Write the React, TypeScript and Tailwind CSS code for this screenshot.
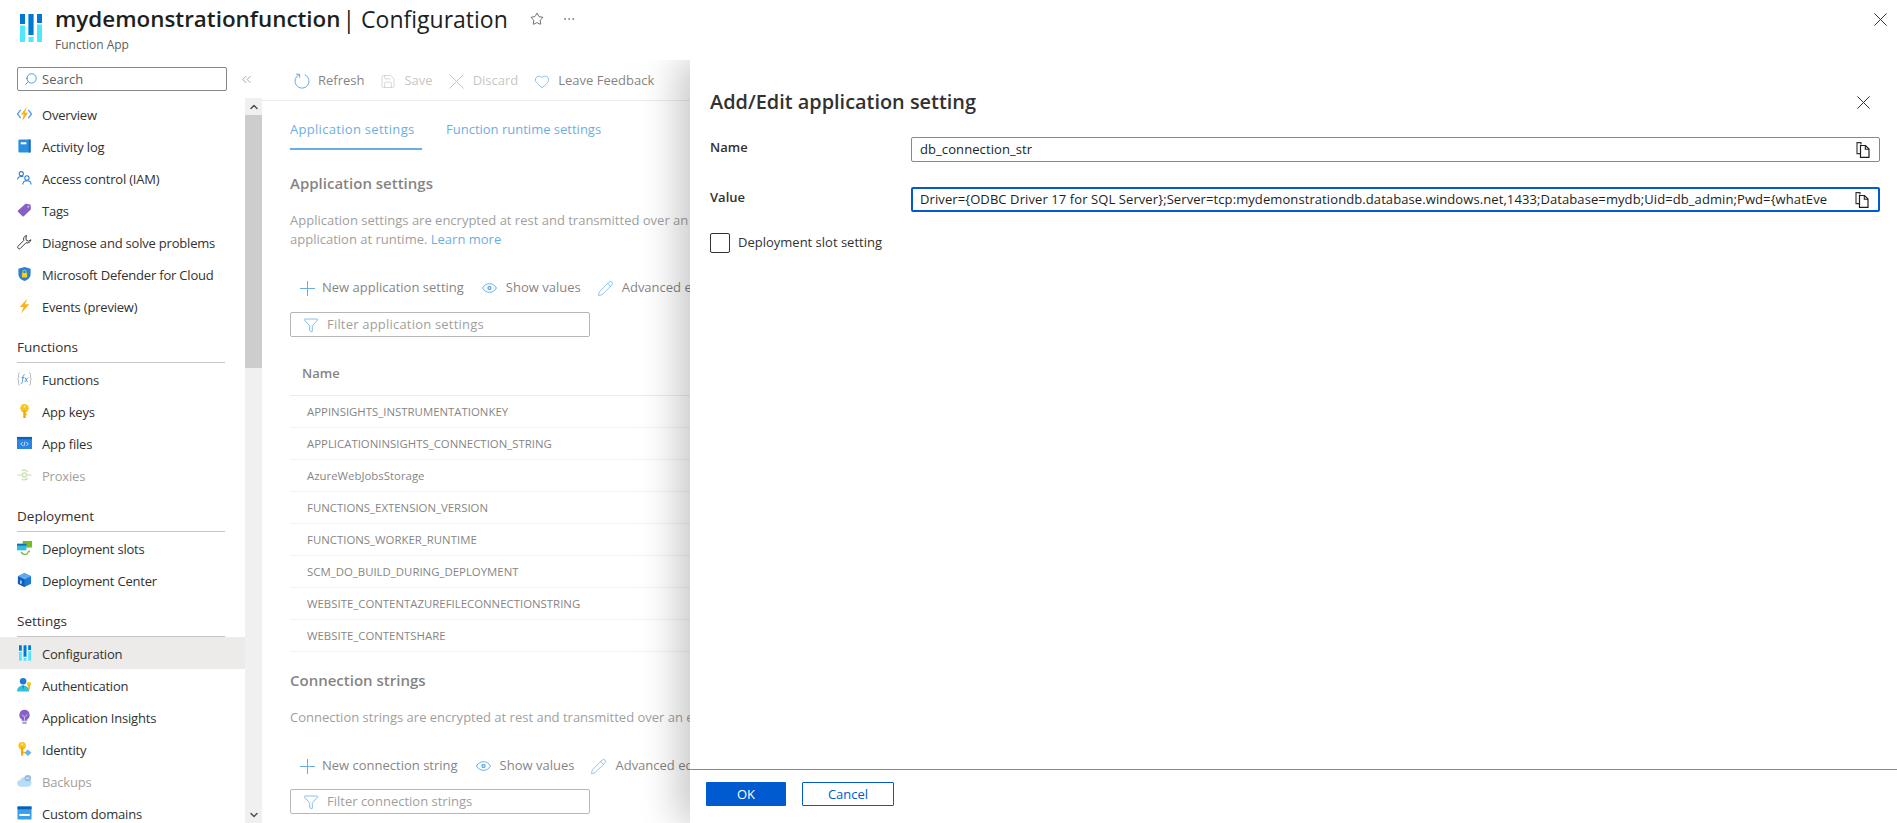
import React from "react";
import {
  ChevronDown,
  ChevronUp,
  ChevronsLeft,
  Ellipsis,
  Funnel,
  Heart,
  Pencil,
  Save,
  Search,
  Star,
} from "lucide-react";

function ConfigIcon({ width = 22, height = 28 }: { width?: number; height?: number }) {
  return (
    <svg width={width} height={height} viewBox="0 0 22 28">
      <rect x="0" y="0" width="5" height="28" rx="0.6" fill="#50e6ff" />
      <rect x="8.500" y="0" width="5" height="28" rx="0.6" fill="#50e6ff" />
      <rect x="17" y="0" width="5" height="28" rx="0.6" fill="#50e6ff" />
      <rect x="0" y="0" width="5" height="10" fill="#0078d4" />
      <rect x="8.500" y="0" width="5" height="21" fill="#0078d4" />
      <rect x="17" y="0" width="5" height="9" fill="#0078d4" />
      <rect x="0" y="10" width="5" height="1.500" fill="#fff" />
      <rect x="8.500" y="21" width="5" height="2" fill="#fff" />
      <rect x="17" y="9" width="5" height="1.500" fill="#fff" />
    </svg>
  );
}

function CrossIcon({ size, className }: { size: number; className?: string }) {
  return (
    <svg width={size} height={size} viewBox="0 0 16 16" className={className}>
      <path d="M.5.5l15 15M15.500.5l-15 15" fill="none" stroke="currentColor" strokeWidth={(16 / size) * 1} />
    </svg>
  );
}

function PlusIcon() {
  return (
    <svg width="15" height="15" viewBox="0 0 15 15" className="text-[#0078d4] mr-[7px]">
      <path d="M7.500 0v15M0 7.500h15" stroke="currentColor" strokeWidth="1" />
    </svg>
  );
}

function EyeIcon({ className }: { className?: string }) {
  return (
    <svg width="15" height="10" viewBox="0 0 15 10" className={className}>
      <path d="M.5 5C2.300 2 4.700.7 7.500.7S12.700 2 14.500 5c-1.800 3-4.200 4.300-7 4.300S2.300 8 .5 5z" fill="none" stroke="#0078d4" strokeWidth="1" />
      <circle cx="7.500" cy="5" r="2.200" fill="#0078d4" />
      <circle cx="7.500" cy="5" r=".8" fill="#fff" />
    </svg>
  );
}

function RefreshIcon() {
  return (
    <svg width="16" height="16" viewBox="0 0 16 16" fill="none" stroke="#0078d4" strokeWidth="1">
      <path d="M5.300 1.700a7 7 0 1 0 5.400 0" />
      <path d="M2 1.200h3.600v3.600" />
    </svg>
  );
}

function CopyIcon() {
  return (
    <svg width="14" height="16" viewBox="0 0 14 16" fill="none" className="ml-[28px] shrink-0">
      <path d="M5 2.500V.6H1v11h3" stroke="#323130" strokeWidth="1.100" />
      <path d="M4.500 3.500h5l3.500 3.500v8.400H4.500z" fill="#fff" stroke="#201f1e" strokeWidth="1.200" />
      <path d="M9.300 3.500V7.200H13" stroke="#201f1e" strokeWidth="1.100" />
    </svg>
  );
}

const icons: Record<string, React.ReactNode> = {
  overview: (
    <svg width="16" height="16" viewBox="0 0 16 16">
      <path d="M4 3.500 0.500 8 4 12.500" fill="none" stroke="#50a0e6" strokeWidth="1.400" />
      <path d="M12 3.500 15.500 8 12 12.500" fill="none" stroke="#50a0e6" strokeWidth="1.400" />
      <path d="M10.500 0.500 4 8.500h3.200L5.500 15.500l6.500-8.800H8.500z" fill="#fcb01e" />
    </svg>
  ),
  log: (
    <svg width="16" height="16" viewBox="0 0 16 16">
      <rect x="1.500" y="1" width="13" height="14" rx="1.200" fill="#2b8fe0" />
      <rect x="12.500" y="1" width="2" height="14" fill="#1b6bb4" />
      <rect x="4" y="4" width="6" height="2.200" fill="#fff" />
    </svg>
  ),
  iam: (
    <svg width="16" height="16" viewBox="0 0 16 16" fill="none" stroke="#2a7cd3" strokeWidth="1.100">
      <circle cx="4.600" cy="3.400" r="2.200" />
      <path d="M0.700 9.500c0-2 1.600-3.200 3.900-3.200 0.800 0 1.500 0.100 2.100 0.400" />
      <circle cx="10.600" cy="8" r="2.300" />
      <path d="M6.200 15c0-2.600 1.800-4 4.400-4s4.400 1.400 4.400 4" />
    </svg>
  ),
  tag: (
    <svg width="16" height="16" viewBox="0 0 16 16">
      <path d="M1 8.500 8.500 1.800c.4-.4 1-.5 1.500-.4l3.600 .6c.7.1 1 .5 1 1.200l.2 3.400c0 .5-.2 1-.6 1.300L7.200 14.600c-.4.4-1 .4-1.400 0L1 9.900c-.4-.4-.4-1 0-1.400z" fill="#8661c5" />
      <circle cx="12" cy="4.400" r="1" fill="#d8c8f0" />
    </svg>
  ),
  wrench: (
    <svg width="16" height="16" viewBox="0 0 16 16" fill="none" stroke="#323130" strokeWidth="1">
      <path d="M10.200 1.100a4 4 0 0 0-3 5.300L1.100 12.500a1.500 1.500 0 0 0 0 2.100l.3.300a1.500 1.500 0 0 0 2.100 0l6.100-6.100a4 4 0 0 0 5.300-3.200l-2.500 1.500-2.500-.9-.4-2.500z" />
    </svg>
  ),
  defender: (
    <svg width="16" height="16" viewBox="0 0 16 16">
      <path d="M8 0.500 14.500 2.500V8c0 3.800-3 6.200-6.500 7.500C4.500 14.200 1.500 11.800 1.500 8V2.500z" fill="#2b7fd4" />
      <rect x="5.200" y="7" width="5.600" height="4.600" rx="0.500" fill="#fcd116" />
      <path d="M6.300 7V5.500a1.700 1.700 0 0 1 3.400 0V7" fill="none" stroke="#fcd116" strokeWidth="1" />
    </svg>
  ),
  events: (
    <svg width="16" height="16" viewBox="0 0 16 16">
      <path d="M11 0 3 9h4l-2.500 7 8.500-10H8.500z" fill="#fcb01e" />
    </svg>
  ),
  fx: (
    <svg width="16" height="16" viewBox="0 0 16 16" fill="none">
      <path d="M3 1.500c-1.200 0-1.300.6-1.300 1.500v3c0 1-.4 1.600-1.200 2 .8.400 1.200 1 1.200 2v3c0 .9.100 1.500 1.300 1.500" stroke="#a0a0a0" strokeWidth=".8" />
      <path d="M13 1.500c1.200 0 1.300.6 1.300 1.500v3c0 1 .4 1.600 1.200 2-.8.400-1.200 1-1.200 2v3c0 .9-.1 1.500-1.300 1.500" stroke="#a0a0a0" strokeWidth=".8" />
      <path d="M8.300 3.500C7 3.200 6.700 4 6.500 5.500L5.700 11c-.2 1.300-.6 2-1.700 1.700M4.800 6.500h3M8.500 6.500l2.800 4.800M11.600 6.500 8.200 11.300" stroke="#3c8ce0" strokeWidth=".9" />
    </svg>
  ),
  key: (
    <svg width="16" height="16" viewBox="0 0 16 16">
      <circle cx="8" cy="5" r="4.500" fill="#fcc419" />
      <rect x="6.700" y="7" width="2.600" height="8.500" fill="#f2a900" />
      <rect x="9" y="11" width="1.500" height="1.300" fill="#f2a900" />
      <circle cx="8" cy="3.300" r="1" fill="#fff3c4" />
    </svg>
  ),
  files: (
    <svg width="16" height="16" viewBox="0 0 16 16">
      <rect x="0" y="1.500" width="16" height="13" rx="0.500" fill="#2a85e0" />
      <rect x="0" y="1.500" width="16" height="2.500" fill="#0f5fb8" />
      <path d="M6 7 4 9l2 2M10 7l2 2-2 2M8.700 6.500 7.300 11.500" fill="none" stroke="#fff" strokeWidth=".8" />
    </svg>
  ),
  proxies: (
    <svg width="16" height="16" viewBox="0 0 16 16" fill="none" stroke="#b5d89a" strokeWidth="1.300">
      <circle cx="8" cy="8" r="2.200" />
      <path d="M0.500 8H5.500M10.500 8h5M5 3.500a6 6 0 0 1 6.500 1M5 12.500a6 6 0 0 0 6.500-1" />
    </svg>
  ),
  slots: (
    <svg width="16" height="16" viewBox="0 0 16 16">
      <rect x="6" y="0.500" width="10" height="7" fill="#76bc2d" />
      <rect x="0" y="3.500" width="10" height="7" fill="#32bedd" />
      <rect x="0" y="3.500" width="10" height="2" fill="#1b6bb4" />
      <path d="M4.500 12a4 4 0 0 0 7.500 0.500" fill="none" stroke="#76bc2d" strokeWidth="1.300" />
      <path d="M10.300 12.500h3.400V10z" fill="#76bc2d" />
    </svg>
  ),
  center: (
    <svg width="16" height="16" viewBox="0 0 16 16">
      <path d="M8 0.500 15 4v8l-7 3.500L1 12V4z" fill="#1f78d1" />
      <path d="M8 0.500 15 4 8 7.500 1 4z" fill="#5ea9ef" />
      <path d="M8 7.500V15.500L1 12V4z" fill="#0f5fb8" />
      <rect x="3.500" y="8.500" width="1.300" height="3.500" fill="#fff" />
    </svg>
  ),
  config: <ConfigIcon width={12} height={16} />,
  auth: (
    <svg width="16" height="16" viewBox="0 0 16 16">
      <circle cx="6.500" cy="4" r="3.500" fill="#1f78d1" />
      <path d="M0 15c0-4 2.500-6.500 6.500-6.500S13 11 13 15z" fill="#32bedd" />
      <path d="M5.500 8.500h2L6.500 13z" fill="#1f78d1" />
      <circle cx="12.800" cy="7" r="2.300" fill="#fcc419" />
      <rect x="12" y="8" width="1.600" height="5" fill="#f2a900" />
    </svg>
  ),
  insights: (
    <svg width="16" height="16" viewBox="0 0 16 16">
      <path d="M8 0.300a5.500 5.500 0 0 0-3 10.100V12h6v-1.600A5.500 5.500 0 0 0 8 0.300z" fill="#8661c5" />
      <path d="M5 5.500 8 8l3-2.500M8 8v4" fill="none" stroke="#e3d6f5" strokeWidth=".8" />
      <rect x="5.500" y="12.800" width="5" height="2.700" rx="1" fill="#b0a8c0" />
    </svg>
  ),
  identity: (
    <svg width="16" height="16" viewBox="0 0 16 16">
      <circle cx="5.500" cy="4.500" r="4" fill="#fcc419" />
      <rect x="4.300" y="6" width="2.400" height="9" fill="#f2a900" />
      <rect x="6.500" y="11" width="2" height="1.300" fill="#f2a900" />
      <circle cx="5.500" cy="3" r="1" fill="#fff3c4" />
      <path d="M11.500 8.500 15.500 12l-4 3.500-3.500-3.500z" fill="#6bb3e8" />
    </svg>
  ),
  backups: (
    <svg width="16" height="16" viewBox="0 0 16 16">
      <path d="M4 14a3.500 3.500 0 0 1-.6-7A5 5 0 0 1 12.500 6.500 3.800 3.800 0 0 1 12 14z" fill="#a5d8f3" />
      <circle cx="11.500" cy="5" r="3.500" fill="#7aa9e6" />
      <path d="M9.500 5h3.500" stroke="#fff" strokeWidth="1" />
    </svg>
  ),
  domains: (
    <svg width="16" height="16" viewBox="0 0 16 16">
      <rect x="0.500" y="1" width="15" height="14" rx="0.500" fill="#3aa0e8" />
      <rect x="0.500" y="1" width="15" height="3" fill="#0f5fb8" />
      <rect x="2.500" y="9" width="11" height="2.200" fill="#fff" />
    </svg>
  ),
};

type NavItem = { label: string; icon: string; muted?: boolean; active?: boolean };
type NavGroup = { title?: string; items: NavItem[] };

const navGroups: NavGroup[] = [
  {
    items: [
      { label: "Overview", icon: "overview" },
      { label: "Activity log", icon: "log" },
      { label: "Access control (IAM)", icon: "iam" },
      { label: "Tags", icon: "tag" },
      { label: "Diagnose and solve problems", icon: "wrench" },
      { label: "Microsoft Defender for Cloud", icon: "defender" },
      { label: "Events (preview)", icon: "events" },
    ],
  },
  {
    title: "Functions",
    items: [
      { label: "Functions", icon: "fx" },
      { label: "App keys", icon: "key" },
      { label: "App files", icon: "files" },
      { label: "Proxies", icon: "proxies", muted: true },
    ],
  },
  {
    title: "Deployment",
    items: [
      { label: "Deployment slots", icon: "slots" },
      { label: "Deployment Center", icon: "center" },
    ],
  },
  {
    title: "Settings",
    items: [
      { label: "Configuration", icon: "config", active: true },
      { label: "Authentication", icon: "auth" },
      { label: "Application Insights", icon: "insights" },
      { label: "Identity", icon: "identity" },
      { label: "Backups", icon: "backups", muted: true },
      { label: "Custom domains", icon: "domains" },
    ],
  },
];

const appSettings = [
  "APPINSIGHTS_INSTRUMENTATIONKEY",
  "APPLICATIONINSIGHTS_CONNECTION_STRING",
  "AzureWebJobsStorage",
  "FUNCTIONS_EXTENSION_VERSION",
  "FUNCTIONS_WORKER_RUNTIME",
  "SCM_DO_BUILD_DURING_DEPLOYMENT",
  "WEBSITE_CONTENTAZUREFILECONNECTIONSTRING",
  "WEBSITE_CONTENTSHARE",
];

const connectionValue =
  "Driver={ODBC Driver 17 for SQL Server};Server=tcp:mydemonstrationdb.database.windows.net,1433;Database=mydb;Uid=db_admin;Pwd={whatEve";

function Sidebar() {
  return (
    <aside className="w-[262px] shrink-0 flex flex-col h-full">
      <div className="h-[38px] shrink-0 flex items-start pt-[7px] pl-[17px]">
        <div className="w-[210px] h-[24px] border border-[#8a8886] rounded-[2px] flex items-center pl-[6px] gap-[4px]">
          <Search size={14} strokeWidth={1.2} className="text-[#0078d4] -scale-x-100" />
          <span className="text-[#605e5c] pt-[2px]">Search</span>
        </div>
        <ChevronsLeft size={15} strokeWidth={1.2} className="ml-[12px] mt-[5px] text-[#8a8886]" />
      </div>
      <div className="flex flex-1 min-h-0">
        <nav className="w-[245px] shrink-0 overflow-hidden">
          {navGroups.map((group, i) => (
            <div key={i}>
              {group.title && (
                <div className="h-[41px] ml-[17px] mr-[20px] border-b border-[#c8c6c4] flex items-end pb-[5px] text-[13.5px] font-medium text-[#323130]">
                  {group.title}
                </div>
              )}
              {group.items.map((item) => (
                <div
                  key={item.label}
                  className={`h-[32px] pl-[17px] flex items-center gap-[10px] tracking-[-0.2px] ${item.active ? "bg-[#edebe9]" : ""} ${item.muted ? "text-[#a19f9d]" : "text-[#323130]"}`}
                >
                  <span className={`w-[15px] flex justify-center ${item.muted ? "opacity-80" : ""}`}>{icons[item.icon]}</span>
                  <span className="pt-[3px]">{item.label}</span>
                </div>
              ))}
            </div>
          ))}
        </nav>
        <div className="w-[17px] shrink-0 bg-[#f0f0f0] flex flex-col justify-between relative">
          <div className="h-[17px] flex items-center justify-center bg-[#f0f0f0]">
            <ChevronUp size={12} strokeWidth={3} className="text-[#505050]" />
          </div>
          <div className="absolute top-[17px] left-0 w-full h-[253px] bg-[#cdcdcd]" />
          <div className="h-[17px] flex items-center justify-center">
            <ChevronDown size={12} strokeWidth={3} className="text-[#505050]" />
          </div>
        </div>
      </div>
    </aside>
  );
}

function ToolbarButton({ icon, label, muted, className }: { icon: React.ReactNode; label: string; muted?: boolean; className?: string }) {
  return (
    <div className={`flex items-center gap-[8px] ${muted ? "text-[#a19f9d]" : "text-[#323130]"} ${className ?? ""}`}>
      <span className="w-[16px] flex justify-center">{icon}</span>
      <span>{label}</span>
    </div>
  );
}

function SettingsCommands({ newLabel }: { newLabel: string }) {
  return (
    <div className="flex items-center h-[24px] pl-[10px] text-[#323130] whitespace-nowrap">
      <PlusIcon />
      <span>{newLabel}</span>
      <EyeIcon className="ml-[18px] mr-[9px]" />
      <span>Show values</span>
      <Pencil size={17} strokeWidth={1} className="text-[#0078d4] ml-[16px] mr-[8px]" />
      <span>Advanced edit</span>
    </div>
  );
}

function FilterBox({ placeholder, className }: { placeholder: string; className?: string }) {
  return (
    <div className={`w-[300px] h-[25px] border border-[#8a8886] rounded-[2px] flex items-center pl-[12px] gap-[8px] text-[#605e5c] ${className ?? ""}`}>
      <Funnel size={16} strokeWidth={1.2} className="text-[#0078d4]" />
      <span>{placeholder}</span>
    </div>
  );
}

function MainContent() {
  return (
    <main className="flex-1 min-w-0 h-full overflow-hidden relative">
      <div className="h-[41px] border-b border-[#e1dfdd] flex items-center pl-[32px] pt-[2px] whitespace-nowrap">
        <ToolbarButton icon={<RefreshIcon />} label="Refresh" />
        <ToolbarButton className="ml-[16px]" muted icon={<Save size={17} strokeWidth={1} />} label="Save" />
        <ToolbarButton className="ml-[16px]" muted icon={<CrossIcon size={15} />} label="Discard" />
        <ToolbarButton className="ml-[16px]" icon={<Heart size={17} strokeWidth={1.1} className="text-[#0078d4]" />} label="Leave Feedback" />
      </div>

      <div className="pl-[28px] whitespace-nowrap">
        <div className="h-[49px] flex items-start">
          <div className="w-[132px] h-full border-b-2 border-[#0078d4] text-[#0078d4] pt-[19px] font-medium tracking-[0.3px]">Application settings</div>
          <div className="ml-[24px] text-[#0078d4] pt-[19px]">Function runtime settings</div>
        </div>

        <h2 className="mt-[23px] text-[15px] font-semibold text-[#323130] leading-[20px]">Application settings</h2>
        <p className="mt-[18px] leading-[19px] text-[#605e5c]">
          Application settings are encrypted at rest and transmitted over an encrypted channel.
          <br />
          application at runtime. <span className="text-[#0078d4]">Learn more</span>
        </p>
        <div className="mt-[27px]">
          <SettingsCommands newLabel="New application setting" />
        </div>
        <FilterBox placeholder="Filter application settings" className="mt-[12px] tracking-[0.2px]" />

        <div className="mt-[27px]">
          <div className="h-[32px] border-b border-[#e1dfdd] pl-[12px] font-semibold text-[#323130]">Name</div>
          {appSettings.map((name) => (
            <div key={name} className="h-[32px] border-b border-[#edebe9] pl-[17px] flex items-center text-[11.4px] text-[#323130]">
              {name}
            </div>
          ))}
        </div>

        <h2 className="mt-[18px] text-[15px] font-semibold text-[#323130] leading-[20px]">Connection strings</h2>
        <p className="mt-[18px] leading-[19px] text-[#605e5c]">Connection strings are encrypted at rest and transmitted over an encrypted channel.</p>
        <div className="mt-[27px]">
          <SettingsCommands newLabel="New connection string" />
        </div>
        <FilterBox placeholder="Filter connection strings" className="mt-[11px]" />
      </div>

      {/* scrim from the open blade */}
      <div className="absolute inset-0 bg-white/40" />
    </main>
  );
}

function CopyField({ value, focused }: { value: string; focused?: boolean }) {
  return (
    <div
      className={`flex-1 min-w-0 h-[25px] rounded-[2px] flex items-center pr-[9px] ${focused ? "border-2 border-[#005bd1] pl-[7px]" : "border border-[#8a8886] pl-[8px]"}`}
    >
      <span className="flex-1 min-w-0 overflow-hidden whitespace-nowrap text-[#201f1e] tracking-[0.09px]">{value}</span>
      <CopyIcon />
    </div>
  );
}

function EditPanel() {
  return (
    <section className="absolute top-0 bottom-0 left-[690px] right-0 bg-white flex flex-col shadow-[-12px_0_36px_rgba(0,0,0,0.22)] [clip-path:inset(0_0_0_-100px)]">
      <div className="flex-1 pl-[20px] pr-[17px]">
        <div className="h-[82px] flex items-center justify-between pt-[2px]">
          <h1 className="text-[19.900px] font-semibold text-[#323130]">Add/Edit application setting</h1>
          <CrossIcon size={13} className="text-[#323130] mr-[10px]" />
        </div>
        <div className="flex items-start mt-[-5px]">
          <label className="w-[201px] shrink-0 font-semibold text-[#323130] mt-[1px]">Name</label>
          <CopyField value="db_connection_str" />
        </div>
        <div className="flex items-start mt-[25px]">
          <label className="w-[201px] shrink-0 font-semibold text-[#323130] mt-[1px]">Value</label>
          <CopyField value={connectionValue} focused />
        </div>
        <div className="flex items-center mt-[21px] gap-[8px]">
          <span className="w-[20px] h-[20px] border border-[#323130] rounded-[2px]" />
          <span className="text-[#323130]">Deployment slot setting</span>
        </div>
      </div>
      <div className="h-[54px] border-t border-[#8a8886] flex items-start pt-[12px] pl-[16px] gap-[16px] shrink-0">
        <button className="w-[80px] h-[24px] bg-[#005bd1] text-white rounded-[1px] pt-[1px]">OK</button>
        <button className="w-[92px] h-[24px] border border-[#005bd1] text-[#005bd1] rounded-[1px] pt-[1px]">Cancel</button>
      </div>
    </section>
  );
}

export default function App() {
  return (
    <div className="w-[1897px] h-[823px] overflow-hidden bg-white flex flex-col text-[13px] font-['Open_Sans',sans-serif]">
      <header className="h-[60px] shrink-0 flex items-start pl-[20px] pr-[10px] pt-[14px]">
        <ConfigIcon />
        <div className="ml-[13px] mt-[-14px]">
          <div className="flex items-center h-[38px] whitespace-nowrap">
            <span className="text-[22.400px] font-semibold text-[#201f1e]">mydemonstrationfunction</span>
            <span className="text-[23px] text-[#201f1e] ml-[2px]">| Configuration</span>
            <Star size={14} strokeWidth={1.2} className="ml-[22px] text-[#323130]" />
            <Ellipsis size={14} strokeWidth={1} className="ml-[18px] text-[#605e5c]" />
          </div>
          <div className="text-[12px] text-[#605e5c] -mt-[2px]">Function App</div>
        </div>
        <CrossIcon size={13} className="ml-auto mt-[-1px] text-[#323130]" />
      </header>
      <div className="flex-1 min-h-0 flex relative">
        <Sidebar />
        <MainContent />
        <EditPanel />
      </div>
    </div>
  );
}
